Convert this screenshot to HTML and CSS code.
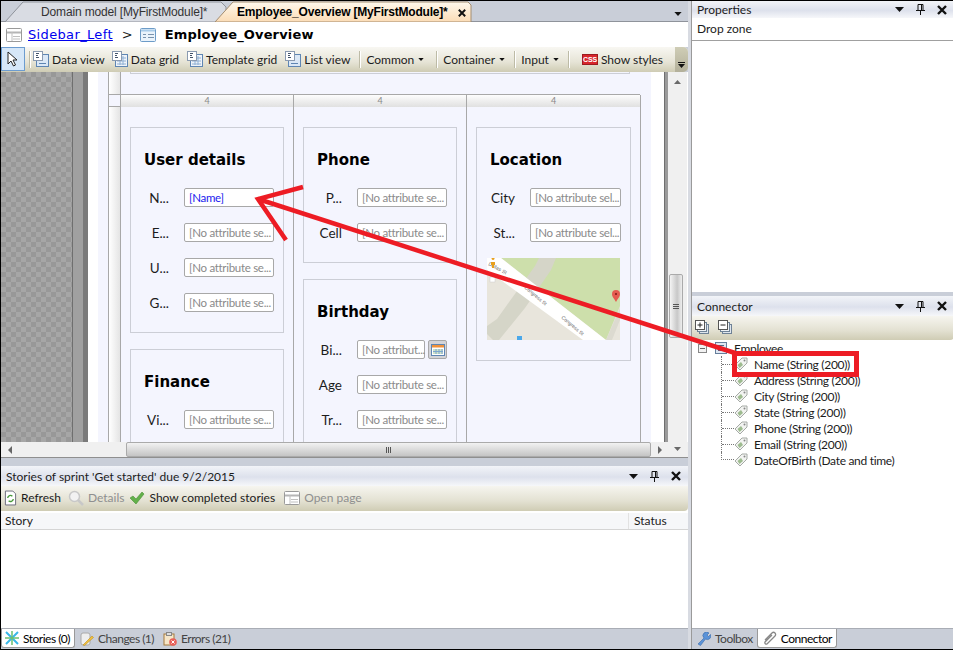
FILE: index.html
```html
<!DOCTYPE html>
<html lang="en">
<head>
    <meta charset="UTF-8">
    <title>Employee_Overview</title>
    <link rel="stylesheet" href="styles.css">
</head>
<body>
<svg class="defs" width="0" height="0">
    <symbol id="i-view" viewBox="0 0 16 16">
        <rect x="3.5" y="3.5" width="12" height="12" fill="#dbe8f6" stroke="#5f86b3"/>
        <rect x="0.5" y="0.5" width="9" height="9" fill="#fff" stroke="#8a9ab0"/>
        <path d="M3 2.5h3M3 4.5h2M3 6.5h3" stroke="#44546a"/>
        <path d="M6 12.5h7" stroke="#5f86b3"/>
    </symbol>
    <symbol id="i-grid" viewBox="0 0 16 16">
        <rect x="3.5" y="3.5" width="12" height="12" fill="#eef3f9" stroke="#5f86b3"/>
        <path d="M5 7h9M5 10h9M5 13h9M8 5v9M11 5v9" stroke="#8fb0d4"/>
        <rect x="0.5" y="0.5" width="9" height="9" fill="#fff" stroke="#8a9ab0"/>
        <path d="M3 2.5h3M3 4.5h2M3 6.5h3" stroke="#44546a"/>
    </symbol>
    <symbol id="i-page" viewBox="0 0 16 14">
        <rect x="0.5" y="0.5" width="15" height="13" rx="1" fill="#fff" stroke="#9a9a9a"/>
        <path d="M1 4.5h14" stroke="#b5b5b5" stroke-width="2"/>
        <path d="M6 4v9M7 8.5h7M7 11h7" stroke="#c0c0c0"/>
    </symbol>
    <symbol id="i-page-blue" viewBox="0 0 16 14">
        <rect x="0.5" y="0.5" width="15" height="13" rx="1" fill="#eaf3fb" stroke="#6d9cc8"/>
        <path d="M1 2.5h14" stroke="#a8cbe8" stroke-width="2"/>
        <path d="M3 6.5h3M3 9.5h3M8 6.5h6M8 9.5h6" stroke="#7a93ad"/>
    </symbol>
    <symbol id="i-attr" viewBox="0 0 14 14">
        <path d="M1 8 8 1h5v5l-7 7z" fill="#f2f3f1" stroke="#a5aaa5"/>
        <path d="M3.500 8l3.500-3 2 3-3.500 3z" fill="#9dbb8f"/>
        <circle cx="10.500" cy="3.500" r="1" fill="#888"/>
    </symbol>
    <symbol id="i-caret" viewBox="0 0 9 5">
        <path d="M0 0h9L4.500 5z" fill="#111"/>
    </symbol>
    <symbol id="i-pin" viewBox="0 0 9 11">
        <path d="M2 .5h5v6H2zM0 6.500h9M4.500 7v4M5.500 1v5" fill="none" stroke="#111"/>
    </symbol>
    <symbol id="i-close" viewBox="0 0 10 10">
        <path d="M1 1l8 8M9 1L1 9" stroke="#111" stroke-width="2.400"/>
    </symbol>
    <symbol id="i-stack-plus" viewBox="0 0 14 14">
        <rect x="4.500" y="4.500" width="9" height="9" fill="#dfe6ee" stroke="#6f8296"/>
        <rect x="2.500" y="2.500" width="9" height="9" fill="#eef2f6" stroke="#6f8296"/>
        <rect x="0.500" y="0.500" width="9" height="9" fill="#fff" stroke="#555"/>
        <path d="M2.500 5h5M5 2.500v5" stroke="#222"/>
    </symbol>
    <symbol id="i-stack-minus" viewBox="0 0 14 14">
        <rect x="4.500" y="4.500" width="9" height="9" fill="#dfe6ee" stroke="#6f8296"/>
        <rect x="2.500" y="2.500" width="9" height="9" fill="#eef2f6" stroke="#6f8296"/>
        <rect x="0.500" y="0.500" width="9" height="9" fill="#fff" stroke="#555"/>
        <path d="M2.500 5h5" stroke="#222"/>
    </symbol>
</svg>

<div class="app">
    <div class="left">
        <div class="doc-tabs">
            <div class="doc-tab doc-tab-off">
                <svg class="tab-shape" viewBox="0 0 222 21" preserveAspectRatio="none"><path d="M0 21 18 1h198l5 5v15z" fill="#d9dce3" stroke="#8f939b"/></svg>
                <span class="tab-text">Domain model [MyFirstModule]*</span>
            </div>
            <div class="doc-tab doc-tab-on">
                <svg class="tab-shape" viewBox="0 0 257 21" preserveAspectRatio="none">
                    <defs><linearGradient id="peach" x1="0" y1="0" x2="0" y2="1"><stop offset="0" stop-color="#fff8ec"/><stop offset="1" stop-color="#fbdcb6"/></linearGradient></defs>
                    <path d="M0 21 18 1h235l3 3v17z" fill="url(#peach)" stroke="#a48d70"/>
                </svg>
                <span class="tab-text tab-text-on">Employee_Overview [MyFirstModule]*</span>
                <svg class="tab-x"><use href="#i-close"/></svg>
            </div>
            <svg class="tabs-menu"><use href="#i-caret"/></svg>
        </div>

        <div class="crumb">
            <svg class="crumb-icon"><use href="#i-page"/></svg>
            <a class="crumb-link">Sidebar_Left</a>
            <span class="crumb-sep">&gt;</span>
            <svg class="crumb-icon"><use href="#i-page-blue"/></svg>
            <span class="crumb-now">Employee_Overview</span>
        </div>

        <div class="toolbar">
            <div class="tool-pointer">
                <svg width="12" height="16" viewBox="0 0 12 16"><path d="M1 1v12l3-3 2.500 5 2-1-2.500-5h4z" fill="#fff" stroke="#222"/></svg>
            </div>
            <span class="tool-sep sep-first"></span>
            <div class="tool tool-tight"><svg class="ico"><use href="#i-view"/></svg>Data view</div>
            <div class="tool"><svg class="ico"><use href="#i-grid"/></svg>Data grid</div>
            <div class="tool"><svg class="ico"><use href="#i-grid"/></svg>Template grid</div>
            <div class="tool tool-drop"><svg class="ico"><use href="#i-view"/></svg>List view</div>
            <span class="tool-sep"></span>
            <div class="tool tool-drop tool-common">Common<svg class="drop"><use href="#i-caret"/></svg></div>
            <span class="tool-sep"></span>
            <div class="tool tool-drop">Container<svg class="drop"><use href="#i-caret"/></svg></div>
            <span class="tool-sep"></span>
            <div class="tool tool-drop">Input<svg class="drop"><use href="#i-caret"/></svg></div>
            <span class="tool-sep"></span>
            <div class="tool tool-css"><span class="css-badge">CSS</span>Show styles</div>
            <div class="tool-grip"><span class="grip-line"></span><svg class="grip-caret"><use href="#i-caret"/></svg></div>
        </div>

        <div class="designer">
            <div class="checker"></div>
            <div class="gutter"></div>
            <div class="page-edge"></div>
            <div class="canvas">
                <div class="top-band"><div class="top-box"></div></div>
                <div class="head-row">
                    <div class="head-corner"></div>
                    <div class="head-cell">4</div>
                    <div class="head-cell">4</div>
                    <div class="head-cell">4</div>
                </div>
                <div class="body-row">
                    <div class="side-cell"></div>

                    <div class="col">
                        <section class="card">
                            <h2>User details</h2>
                            <div class="field"><label>N...</label><span class="input input-set">[Name]</span></div>
                            <div class="field"><label>E...</label><span class="input">[No attribute se...</span></div>
                            <div class="field"><label>U...</label><span class="input">[No attribute se...</span></div>
                            <div class="field"><label>G...</label><span class="input">[No attribute se...</span></div>
                        </section>
                        <section class="card card-cut">
                            <h2>Finance</h2>
                            <div class="field"><label>Vi...</label><span class="input">[No attribute se...</span></div>
                        </section>
                    </div>

                    <div class="col">
                        <section class="card">
                            <h2>Phone</h2>
                            <div class="field"><label>P...</label><span class="input">[No attribute se...</span></div>
                            <div class="field"><label>Cell</label><span class="input">[No attribute se...</span></div>
                        </section>
                        <section class="card card-cut">
                            <h2>Birthday</h2>
                            <div class="field">
                                <label>Bi...</label>
                                <span class="input input-short">[No attribut...</span>
                                <span class="cal-btn">
                                    <svg width="14" height="12" viewBox="0 0 14 12"><rect x=".5" y=".5" width="13" height="11" fill="#fff" stroke="#5f86b3"/><rect x="1" y="1" width="12" height="2.500" fill="#f0913a"/><path d="M2 5h10v5H2z" fill="#cfe3c8"/><path d="M5 5v5M8 5v5M11 5v5M2 7.500h10" stroke="#7da6cf"/></svg>
                                </span>
                            </div>
                            <div class="field"><label>Age</label><span class="input">[No attribute se...</span></div>
                            <div class="field"><label>Tr...</label><span class="input">[No attribute se...</span></div>
                        </section>
                    </div>

                    <div class="col col-last">
                        <section class="card">
                            <h2>Location</h2>
                            <div class="field"><label>City</label><span class="input">[No attribute sel...</span></div>
                            <div class="field"><label>St...</label><span class="input">[No attribute sel...</span></div>
                            <svg class="map" width="133" height="82" viewBox="0 0 133 82">
                                <rect width="133" height="82" fill="#e8e5dc"/>
                                <path d="M14 0h119v48l-14 34z" fill="#cddfab"/>
                                <path d="M52 0h17l-5 12-26 38-26 32H6L0 76V68l10-7 15-21L48 8z" fill="#d5d5c8"/>
                                <path d="M126 66l7-16v12l-8 20h-6z" fill="#dcdad0"/>
                                <path d="M0 0h14l105 82H96L0 12z" fill="#fff"/>
                                <text class="map-label" transform="translate(1 7) rotate(28)">Dallas St</text>
                                <text class="map-label" transform="translate(37 30) rotate(40)">Congress St</text>
                                <text class="map-label" transform="translate(74 60) rotate(40)">Congress St</text>
                                <path d="M6 2a1.500 1.500 0 1 1 .1 0M4 4h4v3H7v3H5V7H4z" fill="#e8a020"/>
                                <rect x="3" y="19" width="5" height="5" fill="#fff" stroke="#ccc" stroke-width=".5"/>
                                <path d="M129 44c-2-4-4-5-4-8a4 4 0 0 1 8 0c0 3-2 4-4 8z" fill="#e55b50"/>
                                <circle cx="129" cy="36" r="1" fill="#7a1a12"/>
                                <rect x="30" y="78" width="5" height="4" fill="#4aa8ea"/>
                            </svg>
                        </section>
                    </div>
                </div>
            </div>
            <div class="page-edge-r"></div>
            <div class="gutter-r"></div>
            <div class="vbar">
                <svg class="bar-arrow-up"><use href="#i-caret"/></svg>
                <div class="vbar-thumb"><span></span><span></span><span></span></div>
                <svg class="bar-arrow-down"><use href="#i-caret"/></svg>
            </div>
        </div>

        <div class="hbar">
            <span class="arrow-left"></span>
            <div class="hbar-thumb"><span></span><span></span><span></span></div>
            <span class="arrow-right"></span>
            <svg class="bar-arrow-corner"><use href="#i-caret"/></svg>
        </div>
        <div class="split"></div>

        <div class="panel stories">
            <div class="panel-title">
                <span class="panel-name">Stories of sprint 'Get started' due 9/2/2015</span>
                <svg class="p-caret"><use href="#i-caret"/></svg>
                <svg class="p-pin"><use href="#i-pin"/></svg>
                <svg class="p-close"><use href="#i-close"/></svg>
            </div>
            <div class="panel-bar">
                <div class="pb-item">
                    <svg class="pb-ico" viewBox="0 0 14 16"><path d="M1.500.5h8l3 3v12h-11z" fill="#fff" stroke="#667"/><path d="M4 8a3 3 0 0 1 5-2M10 9a3 3 0 0 1-5 2" fill="none" stroke="#4a9a3c" stroke-width="1.500"/></svg>
                    Refresh
                </div>
                <div class="pb-item pb-off pb-details">
                    <svg class="pb-ico pb-ico-wide" viewBox="0 0 16 16"><circle cx="6.500" cy="6.500" r="5" fill="#f2f2f2" stroke="#c8c8c8" stroke-width="1.500"/><path d="M10 10l5 5" stroke="#c8c8c8" stroke-width="2.500"/></svg>
                    Details
                </div>
                <div class="pb-item pb-done">
                    <svg class="pb-ico pb-ico-wide" viewBox="0 0 16 16"><path d="M1 8l3-2 3 3 6-7 2 2-8 10z" fill="#62b04a" stroke="#4a8f38" stroke-width=".6"/></svg>
                    Show completed stories
                </div>
                <div class="pb-item pb-off">
                    <svg class="pb-ico pb-ico-wide" viewBox="0 0 16 14"><use href="#i-page"/></svg>
                    Open page
                </div>
            </div>
            <div class="list-head"><span class="lh-story">Story</span><span class="lh-status">Status</span></div>
            <div class="list-body"></div>
        </div>

        <div class="bottom-tabs">
            <div class="b-tab b-tab-on b-tab-first">
                <svg class="b-ico" viewBox="0 0 14 14"><path d="M1 1l12 12M13 1L1 13" stroke="#39b7e8" stroke-width="2"/><path d="M7 0v14M0 7h14" stroke="#6cc070" stroke-width="1.500"/></svg>
                Stories (0)
            </div>
            <div class="b-tab">
                <svg class="b-ico" viewBox="0 0 14 14"><rect x="1" y="1" width="9" height="12" rx="2" fill="#eee" stroke="#aaa"/><path d="M3 13l9-9 1.500 1.500-9 8z" fill="#f0c040" stroke="#c09020" stroke-width=".6"/></svg>
                Changes (1)
            </div>
            <div class="b-tab">
                <svg class="b-ico" viewBox="0 0 14 14"><rect x="1" y="2" width="10" height="11" fill="#f6e6c8" stroke="#a67a3c"/><rect x="3.500" y="0.500" width="5" height="3" fill="#ddd" stroke="#888"/><circle cx="10" cy="10" r="3.800" fill="#e8605a"/><path d="M8.500 8.500l3 3M11.500 8.500l-3 3" stroke="#fff"/></svg>
                Errors (21)
            </div>
        </div>
    </div>

    <div class="mid"></div>

    <div class="right">
        <div class="panel props">
            <div class="panel-title">
                <span class="panel-name">Properties</span>
                <svg class="p-caret"><use href="#i-caret"/></svg>
                <svg class="p-pin"><use href="#i-pin"/></svg>
                <svg class="p-close"><use href="#i-close"/></svg>
            </div>
            <div class="props-head">Drop zone</div>
        </div>
        <div class="split-r"></div>
        <div class="panel connector">
            <div class="panel-title">
                <span class="panel-name">Connector</span>
                <svg class="p-caret"><use href="#i-caret"/></svg>
                <svg class="p-pin"><use href="#i-pin"/></svg>
                <svg class="p-close"><use href="#i-close"/></svg>
            </div>
            <div class="panel-bar conn-bar">
                <svg class="conn-ico"><use href="#i-stack-plus"/></svg>
                <svg class="conn-ico"><use href="#i-stack-minus"/></svg>
            </div>
            <div class="tree">
                <div class="tree-root">
                    <span class="tree-box"></span>
                    <svg class="tree-ent" viewBox="0 0 12 12"><rect x=".5" y=".5" width="11" height="11" fill="#dfe7f2" stroke="#667f9c"/><path d="M3 3.500h6M3 6h6M3 8.500h6" stroke="#4f6784"/></svg>
                    Employee
                </div>
                <ul class="tree-kids">
                    <li><span class="twig"></span><svg class="tag"><use href="#i-attr"/></svg>Name (String (200))</li>
                    <li><span class="twig"></span><svg class="tag"><use href="#i-attr"/></svg>Address (String (200))</li>
                    <li><span class="twig"></span><svg class="tag"><use href="#i-attr"/></svg>City (String (200))</li>
                    <li><span class="twig"></span><svg class="tag"><use href="#i-attr"/></svg>State (String (200))</li>
                    <li><span class="twig"></span><svg class="tag"><use href="#i-attr"/></svg>Phone (String (200))</li>
                    <li><span class="twig"></span><svg class="tag"><use href="#i-attr"/></svg>Email (String (200))</li>
                    <li><span class="twig"></span><svg class="tag"><use href="#i-attr"/></svg>DateOfBirth (Date and time)</li>
                </ul>
            </div>
        </div>
        <div class="bottom-tabs">
            <div class="b-tab">
                <svg class="b-ico" viewBox="0 0 14 14"><path d="M1 12l6-6a3.500 3.500 0 0 1 5-5l-2 2 1.500 1.500 2-2a3.500 3.500 0 0 1-5 4.500l-5 6.500z" fill="#5b93d8" stroke="#3a6cab" stroke-width=".6"/></svg>
                Toolbox
            </div>
            <div class="b-tab b-tab-on">
                <svg class="b-ico" viewBox="0 0 14 14"><path d="M2 9l7-7a2 2 0 0 1 3 3l-8 8a1.500 1.500 0 0 1-2-2l7-7" fill="none" stroke="#888" stroke-width="1.300"/></svg>
                Connector
            </div>
        </div>
    </div>
</div>

<!-- red callout drawn on top of the screenshot -->
<svg class="callout" width="953" height="650" viewBox="0 0 953 650">
    <path d="M735 353 258 199" stroke="#ed1c24" stroke-width="4.500" fill="none"/>
    <path d="M303 187 258 199 286 240" stroke="#ed1c24" stroke-width="4.500" fill="none"/>
    <rect x="734.500" y="353.500" width="122" height="21" fill="none" stroke="#ed1c24" stroke-width="5"/>
</svg>
</body>
</html>
```

FILE: styles.css
```css
* {
    box-sizing: border-box;
}
html, body {
    margin: 0;
    padding: 0;
    height: 650px;
    overflow: hidden;
}
body {
    position: relative;
    font-family: Lato, Roboto, sans-serif;
    font-size: 12px;
    color: #1c1c1c;
    background: #c9ced8;
}
.defs {
    position: absolute;
}
.app {
    display: grid;
    grid-template-columns: 687px 4px 262px;
    height: 650px;
    border-top: 1px solid #000;
    border-left: 1px solid #000;
    border-bottom: 1px solid #000;
}
.left, .right {
    display: flex;
    flex-direction: column;
    min-width: 0;
    height: 648px;
}
.mid {
    background: #d8dbe2;
    border-right: 1px solid #9a9a9a;
}

/* document tabs */
.doc-tabs {
    position: relative;
    display: flex;
    height: 21px;
    flex: none;
    background: #c9ced8;
    border-bottom: 1px solid #8f939b;
    padding-left: 4px;
}
.doc-tab {
    position: relative;
    height: 21px;
    flex: none;
}
.doc-tab-off {
    width: 222px;
}
.doc-tab-on {
    width: 257px;
    margin-left: -12px;
}
.tab-shape {
    position: absolute;
    inset: 0;
    width: 100%;
    height: 100%;
}
.tab-text {
    position: absolute;
    top: 4px;
    left: 36px;
    font-family: "Liberation Sans", sans-serif;
    font-size: 12px;
    letter-spacing: -0.15px;
    white-space: nowrap;
    color: #333;
}
.tab-text-on {
    left: 22px;
    font-weight: bold;
    letter-spacing: -0.2px;
    color: #000;
}
.tab-x {
    position: absolute;
    top: 8px;
    right: 6px;
    width: 8px;
    height: 8px;
}
.tabs-menu {
    position: absolute;
    top: 11px;
    right: 6px;
    width: 8px;
    height: 4px;
}

/* breadcrumb */
.crumb {
    display: flex;
    align-items: center;
    height: 25px;
    flex: none;
    background: #fff;
    padding-left: 5px;
    font-family: "DejaVu Sans", sans-serif;
    font-size: 13px;
}
.crumb-icon {
    width: 16px;
    height: 14px;
    flex: none;
}
.crumb-link {
    margin-left: 6px;
    color: #0000ee;
    text-decoration: underline;
    letter-spacing: 0.35px;
}
.crumb-sep {
    margin: 0 7px 0 9px;
}
.crumb-now {
    margin-left: 9px;
    font-weight: bold;
    letter-spacing: 0.15px;
    color: #000;
}

/* toolbars */
.toolbar {
    display: flex;
    align-items: center;
    height: 25px;
    padding-bottom: 1px;
    flex: none;
    background: linear-gradient(#f8f7f2, #e6e4d6 60%, #cfccb4);
    border-radius: 0 5px 5px 0;
    white-space: nowrap;
    position: relative;
    z-index: 1;
}
.tool-pointer {
    width: 24px;
    height: 24px;
    flex: none;
    display: flex;
    align-items: center;
    justify-content: center;
    background: #d6e7f8;
    border: 1px solid #6c9cd0;
}
.tool-sep {
    width: 1px;
    height: 17px;
    background: #bdbba6;
    border-right: 1px solid #fff;
    box-sizing: content-box;
    flex: none;
    margin: 0 5px 0 9px;
}
.sep-first {
    margin: 0 2px 0 4px;
}
.tool {
    display: flex;
    align-items: center;
    flex: none;
    margin-right: 8px;
}
.tool-tight {
    margin-right: 7px;
}
.ico {
    width: 16px;
    height: 16px;
    margin-right: 3px;
}
.tool-drop {
    margin-right: 0;
}
.tool-common {
    margin-right: 3px;
}
.drop {
    width: 6px;
    height: 3px;
    margin-left: 4px;
}
.tool-css {
    margin-left: 7px;
    margin-right: 0;
}
.css-badge {
    width: 16px;
    height: 11px;
    margin-right: 3px;
    background: #d8262c;
    color: #fff;
    border: 1px solid #9c1b1f;
    font: bold 7px/9px "Liberation Sans", sans-serif;
    text-align: center;
}
.tool-grip {
    position: absolute;
    right: 0;
    top: 0;
    bottom: 0;
    width: 13px;
    border-radius: 0 5px 5px 0;
    background: linear-gradient(#cfcdb6, #b3b09a);
}
.grip-line {
    position: absolute;
    left: 3px;
    bottom: 9px;
    width: 7px;
    height: 1px;
    background: #111;
}
.grip-caret {
    position: absolute;
    left: 3px;
    bottom: 4px;
    width: 7px;
    height: 4px;
}

/* page designer */
.designer {
    display: flex;
    height: 370px;
    flex: none;
    overflow: hidden;
    background: #fff;
}
.checker {
    width: 71px;
    flex: none;
    background: repeating-conic-gradient(#a6a6a6 0 25%, #989898 0 50%) 0 0 / 10px 10px;
}
.gutter {
    width: 16px;
    flex: none;
    background: linear-gradient(90deg, #6f6f6f 0 1px, #a0a0a0 1px 11px, #7a7a7a 11px);
}
.page-edge {
    width: 10px;
    flex: none;
    background: #fff;
}
.canvas {
    width: 553px;
    flex: none;
    background: #f4f5fe;
    display: flex;
    flex-direction: column;
}
.top-band {
    height: 23px;
    flex: none;
    margin-left: 10px;
    padding-left: 12px;
    border-left: 1px solid #a8a8a8;
    border-bottom: 1px solid #a8a8a8;
    background: linear-gradient(90deg, #fff, #e6e6e6 11px, #a8a8a8 11px, #a8a8a8 12px, transparent 12px);
    margin-right: 11px;
}
.top-box {
    height: 2px;
    margin-left: 9px;
    margin-right: 10px;
    border-left: 1px solid #ccced6;
    border-right: 1px solid #ccced6;
    border-bottom: 1px solid #ccced6;
}
.head-row {
    display: grid;
    grid-template-columns: 12px 173px 173px 174px;
    height: 12px;
    flex: none;
    margin-left: 10px;
    width: 532px;
    border-left: 1px solid #a8a8a8;
    border-bottom: 1px solid #a8a8a8;
}
.head-corner {
    border-right: 1px solid #a8a8a8;
}
.head-cell {
    border-right: 1px solid #a8a8a8;
    background: linear-gradient(#fdfdfd, #e0e0e0);
    color: #888;
    font-size: 9px;
    line-height: 12px;
    text-align: center;
}
.body-row {
    display: grid;
    grid-template-columns: 12px 173px 173px 174px;
    flex: 1;
    min-height: 0;
    margin-left: 10px;
    width: 532px;
    border-left: 1px solid #a8a8a8;
}
.side-cell {
    border-right: 1px solid #a8a8a8;
    background: linear-gradient(90deg, #fff, #e4e4e4);
}
.col {
    border-right: 1px solid #a8a8a8;
    padding: 20px 9px 0 9px;
    display: flex;
    flex-direction: column;
    gap: 16px;
    overflow: hidden;
}
.card {
    flex: none;
    border: 1px solid #ccced6;
    padding: 0 9px 20px 0;
}
/* the fold of the designer falls through these two */
.card-cut {
    flex: 1;
    border-bottom: 0;
    padding-bottom: 0;
}
.card h2 {
    margin: 23px 0 19px 13px;
    font: bold 15px/18px "DejaVu Sans", sans-serif;
    color: #000;
}
.field {
    display: flex;
    align-items: center;
    height: 19px;
    margin-bottom: 16px;
    font-size: 13.5px;
}
.field:last-of-type {
    margin-bottom: 0;
}
.field label {
    width: 38px;
    margin-right: 15px;
    text-align: right;
    flex: none;
}
.input {
    flex: 1;
    min-width: 0;
    height: 19px;
    padding-left: 4px;
    background: #fff;
    border: 1px solid #a8a8a8;
    border-radius: 2px;
    color: #8a8a8a;
    font-size: 11.5px;
    line-height: 17px;
    letter-spacing: -0.3px;
    white-space: nowrap;
}
.input-set {
    color: #1a1aee;
}
.input-short {
    flex: none;
    width: 68px;
}
.cal-btn {
    display: flex;
    align-items: center;
    justify-content: center;
    width: 19px;
    height: 19px;
    margin-left: 3px;
    flex: none;
    border: 1px solid #a8a8a8;
    border-radius: 2px;
    background: #d4d4d8;
}
.map {
    display: block;
    margin: 16px 0 0 10px;
}
.map-label {
    font: 5px "Liberation Sans", sans-serif;
    fill: #666;
}
.page-edge-r {
    width: 13px;
    flex: none;
    background: #fff;
}
.gutter-r {
    width: 4px;
    flex: none;
    background: linear-gradient(90deg, #6f6f6f 0 1px, #9a9a9a 1px);
}
.vbar {
    position: relative;
    width: 19px;
    flex: none;
    background: #f0f0f0;
}
.bar-arrow-up {
    position: absolute;
    top: 8px;
    left: 6px;
    width: 7px;
    height: 4px;
    transform: rotate(180deg);
    opacity: 0.6;
}
.bar-arrow-down {
    position: absolute;
    bottom: -9px;
    left: 6px;
    width: 7px;
    height: 4px;
    opacity: 0.6;
}
.vbar-thumb {
    position: absolute;
    top: 202px;
    left: 1px;
    width: 14px;
    height: 64px;
    border: 1px solid #aaa;
    border-radius: 2px;
    background: linear-gradient(90deg, #f4f4f4, #c8c8c8 60%, #eee);
    display: flex;
    flex-direction: column;
    justify-content: center;
    align-items: center;
    gap: 1px;
}
.vbar-thumb span {
    width: 6px;
    height: 1px;
    background: #555;
}
.hbar {
    position: relative;
    display: flex;
    align-items: center;
    height: 16px;
    flex: none;
    background: #f0f0f0;
    border-bottom: 1px solid #8f8f8f;
}
.arrow-left {
    position: absolute;
    left: 7px;
    top: 4px;
    border: 4px solid transparent;
    border-left: 0;
    border-right: 4px solid #666;
}
.arrow-right {
    position: absolute;
    left: 657px;
    top: 4px;
    border: 4px solid transparent;
    border-right: 0;
    border-left: 4px solid #666;
}
.bar-arrow-corner {
    position: absolute;
    left: 673px;
    top: 5px;
    width: 7px;
    height: 4px;
    opacity: 0.6;
}
.hbar-thumb {
    position: absolute;
    left: 125px;
    top: 0;
    width: 525px;
    height: 15px;
    border: 1px solid #aaa;
    border-radius: 2px;
    background: linear-gradient(#f2f2f2, #c4c4c4);
    display: flex;
    justify-content: center;
    align-items: center;
    gap: 1px;
}
.hbar-thumb span {
    width: 1px;
    height: 6px;
    background: #555;
}
.split {
    height: 8px;
    flex: none;
    background: #c9ced8;
}

/* docked panels */
.panel {
    display: flex;
    flex-direction: column;
    background: #fff;
}
.panel-title {
    display: flex;
    align-items: center;
    height: 20px;
    flex: none;
    padding-left: 5px;
    background: linear-gradient(#f2f4f8, #dde1ec 55%, #f6f7fa);
}
.panel-name {
    flex: 1;
}
.p-caret {
    width: 9px;
    height: 5px;
    margin-right: 12px;
}
.p-pin {
    width: 9px;
    height: 11px;
    margin-right: 12px;
}
.p-close {
    width: 10px;
    height: 10px;
    margin-right: 7px;
}
.panel-bar {
    display: flex;
    align-items: center;
    height: 25px;
    flex: none;
    padding: 0 0 2px 3px;
    background: linear-gradient(#f6f5ef, #e3e1d2 60%, #cfccb4);
    border-radius: 0 0 4px 0;
}
.stories {
    flex: 1;
    min-height: 0;
}
.pb-item {
    display: flex;
    align-items: center;
    margin-right: 7px;
}
.pb-details {
    margin-right: 5px;
}
.pb-done {
    margin-right: 9px;
}
.pb-off {
    color: #8f8f8f;
}
.pb-ico {
    width: 13px;
    height: 16px;
    margin-right: 4px;
}
.pb-ico-wide {
    width: 16px;
    margin-right: 4px;
}
.list-head {
    display: flex;
    justify-content: space-between;
    height: 17px;
    flex: none;
    background: #f6f7f9;
    border-bottom: 1px solid #d5d5d5;
    margin-top: 2px;
    line-height: 15px;
    padding-left: 4px;
}
.lh-status {
    width: 60px;
    border-left: 1px solid #e2e2e2;
    padding-left: 5px;
}
.list-body {
    flex: 1;
}
.bottom-tabs {
    display: flex;
    align-items: flex-start;
    height: 21px;
    flex: none;
    background: #c9ced8;
    color: #444;
    border-top: 1px solid #a9adb5;
    letter-spacing: -0.5px;
}
.b-tab {
    display: flex;
    align-items: center;
    height: 19px;
    padding: 0 4px 0 5px;
}
.b-tab-first {
    padding-left: 3px;
}
.b-tab-on {
    background: #fff;
    color: #000;
    border: 1px solid #999;
    border-top: 0;
    border-radius: 0 0 3px 3px;
}
.b-ico {
    width: 14px;
    height: 14px;
    margin-right: 4px;
}

/* right column */
.props {
    height: 291px;
    flex: none;
}
.props .panel-title {
    height: 17px;
}
.props-head {
    height: 23px;
    padding-left: 5px;
    line-height: 21px;
    border-bottom: 1px solid #a0a0a0;
}
.split-r {
    height: 4px;
    flex: none;
    background: #c9ced8;
}
.connector {
    flex: 1;
    min-height: 0;
}
.connector .panel-bar {
    height: 24px;
}
.conn-ico {
    width: 14px;
    height: 14px;
    margin-right: 9px;
}
.tree {
    padding: 0 0 0 6px;
    letter-spacing: -0.3px;
}
.tree-root {
    display: flex;
    align-items: center;
    height: 16px;
}
.tree-box {
    width: 9px;
    height: 9px;
    margin-right: 8px;
    border: 1px solid #888;
    background: linear-gradient(#666, #666) center / 5px 1px no-repeat #f2f2f2;
}
.tree-ent {
    width: 12px;
    height: 12px;
    margin-right: 7px;
}
.tree-kids {
    list-style: none;
    margin: 0 0 0 23px;
    padding: 0;
}
.tree-kids li {
    display: flex;
    align-items: center;
    height: 16px;
    border-left: 1px dotted #777;
}
.tree-kids li:last-child {
    border-left: 0;
    padding-left: 1px;
}
.tree-kids li:last-child .twig {
    height: 8px;
    align-self: flex-start;
    margin-left: -1px;
    width: 13px;
    border-left: 1px dotted #777;
    border-bottom: 1px dotted #777;
}
.twig {
    width: 12px;
    height: 1px;
    flex: none;
    border-bottom: 1px dotted #777;
}
.tag {
    width: 14px;
    height: 14px;
    margin-right: 6px;
    flex: none;
}

/* callout */
.callout {
    position: absolute;
    top: 0;
    left: 0;
    pointer-events: none;
}
```
